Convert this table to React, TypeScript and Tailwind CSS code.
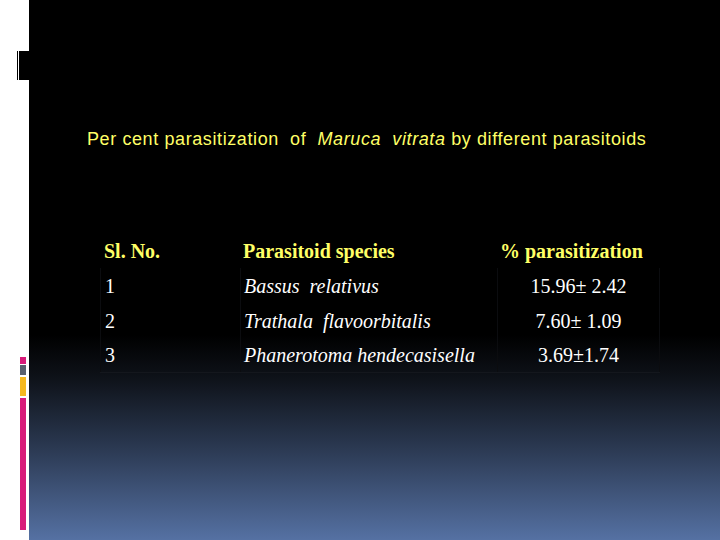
const rows = [
  { no: "1", species: "Bassus  relativus", value: "15.96± 2.42" },
  { no: "2", species: "Trathala  flavoorbitalis", value: "7.60± 1.09" },
  { no: "3", species: "Phanerotoma hendecasisella", value: "3.69±1.74" },
];

export default function App() {
  return (
    <div className="flex w-[720px] h-[540px] overflow-hidden">
      {/* Left white strip with ornaments */}
      <div className="flex w-[29px] shrink-0 flex-col bg-white">
        <div className="mt-[51px] ml-[17px] flex h-[29px] w-[12px]">
          <div className="w-px bg-black" />
          <div className="w-px bg-white" />
          <div className="flex-1 bg-black" />
        </div>
        <div className="mt-[277px] ml-[20px] flex w-[6px] flex-col">
          <div className="h-[7px] bg-[#d81b7a]" />
          <div className="mt-px h-[10px] bg-[#59606e]" />
          <div className="mt-[2px] h-[19px] bg-[#f6b91f]" />
          <div className="mt-[2px] h-[132px] bg-[#d81b7a]" />
        </div>
      </div>

      {/* Slide body */}
      <div className="flex-1 bg-[linear-gradient(to_bottom,#000_0%,#000_62%,#0e1219_70%,#2b3952_83%,#5571a3_100%)] pt-[129px]">
        <p className="ml-[58px] whitespace-pre text-[18px] leading-[20px] tracking-[0.6px] text-[#ffff66] font-['Liberation_Sans',Arial,sans-serif]">
          Per cent parasitization  of  <i>Maruca  vitrata</i> by different parasitoids
        </p>

        <div className="mt-[84px] ml-[71px] w-[560px] font-['Liberation_Serif','Times_New_Roman',serif] text-[20px]">
          <div className="grid h-[35px] grid-cols-[140px_257px_163px] items-center font-bold text-[#ffff66]">
            <div className="pl-[4px]">Sl. No.</div>
            <div className="pl-[3px]">Parasitoid species</div>
            <div className="pl-[3px]">% parasitization</div>
          </div>
          {rows.map((r, i) => (
            <div
              key={r.no}
              className={
                i === rows.length - 1
                  ? "grid h-[35px] grid-cols-[140px_257px_163px] border-b border-[#14171d] text-white"
                  : "grid h-[35px] grid-cols-[140px_257px_163px] text-white"
              }
            >
              <div className="flex items-center border-l border-[#0b0c0f] pl-[4px]">
                {r.no}
              </div>
              <div className="flex items-center whitespace-pre border-l border-[#0b0c0f] pl-[3px] italic">
                {r.species}
              </div>
              <div className="flex items-center justify-center border-x border-[#0b0c0f]">
                {r.value}
              </div>
            </div>
          ))}
        </div>
      </div>
    </div>
  );
}
